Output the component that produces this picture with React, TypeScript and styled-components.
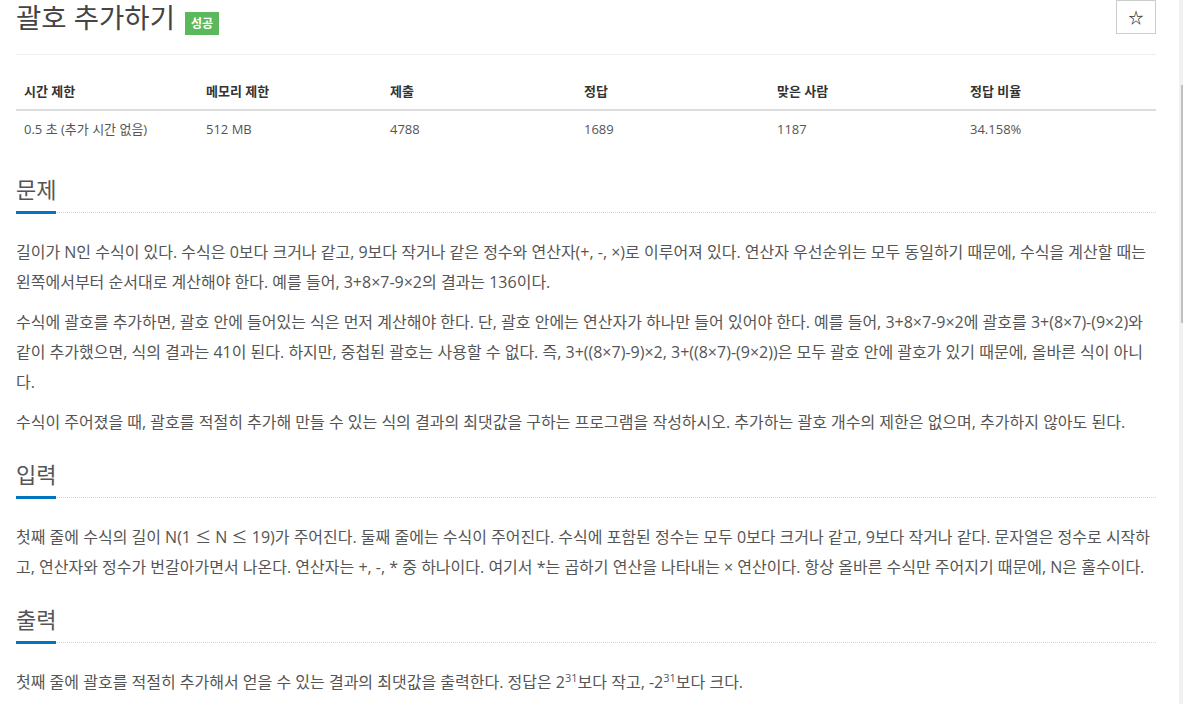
import { FunctionComponent } from 'react'
import styled, { createGlobalStyle } from 'styled-components'

const GlobalStyle = createGlobalStyle`
  html, body {
    margin: 0;
    padding: 0;
    background: #fff;
    overflow: hidden;
  }
  body {
    font-family: "Open Sans", "Noto Sans CJK KR", sans-serif;
    color: #555;
  }
`

const columns = [
  { key: 'time', label: '시간 제한', width: 182 },
  { key: 'memory', label: '메모리 제한', width: 184 },
  { key: 'submit', label: '제출', width: 194 },
  { key: 'accepted', label: '정답', width: 193 },
  { key: 'solved', label: '맞은 사람', width: 193 },
  { key: 'ratio', label: '정답 비율', width: 194 },
]

const stats: Record<string, string> = {
  time: '0.5 초 (추가 시간 없음)',
  memory: '512 MB',
  submit: '4788',
  accepted: '1689',
  solved: '1187',
  ratio: '34.158%',
}

interface SectionProps {
  title: string
}

const Section: FunctionComponent<React.PropsWithChildren<SectionProps>> = ({ title, children }) => (
  <SectionWrap>
    <Headline>
      <HeadlineTitle>{title}</HeadlineTitle>
    </Headline>
    <ProblemText>{children}</ProblemText>
  </SectionWrap>
)

export default function App() {
  return (
    <Page>
      <GlobalStyle />
      <Main>
        <Header>
          <TitleRow>
            <Title>괄호 추가하기</Title>
            <Badge>성공</Badge>
          </TitleRow>
          <StarButton aria-label="즐겨찾기">☆</StarButton>
        </Header>

        <InfoTable>
          <colgroup>
            {columns.map((c) => (
              <Col key={c.key} $w={c.width} />
            ))}
          </colgroup>
          <thead>
            <tr>
              {columns.map((c) => (
                <Th key={c.key}>{c.label}</Th>
              ))}
            </tr>
          </thead>
          <tbody>
            <tr>
              {columns.map((c) => (
                <Td key={c.key}>{stats[c.key]}</Td>
              ))}
            </tr>
          </tbody>
        </InfoTable>

        <Section title="문제">
          <p>
            길이가 N인 수식이 있다. 수식은 0보다 크거나 같고, 9보다 작거나 같은 정수와 연산자(+, -, ×)로 이루어져 있다. 연산자 우선순위는 모두 동일하기 때문에, 수식을 계산할 때는 왼쪽에서부터 순서대로 계산해야 한다. 예를 들어, 3+8×7-9×2의 결과는 136이다.
          </p>
          <p>
            수식에 괄호를 추가하면, 괄호 안에 들어있는 식은 먼저 계산해야 한다. 단, 괄호 안에는 연산자가 하나만 들어 있어야 한다. 예를 들어, 3+8×7-9×2에 괄호를 3+(8×7)-(9×2)와 같이 추가했으면, 식의 결과는 41이 된다. 하지만, 중첩된 괄호는 사용할 수 없다. 즉, 3+((8×7)-9)×2, 3+((8×7)-(9×2))은 모두 괄호 안에 괄호가 있기 때문에, 올바른 식이 아니다.
          </p>
          <p>
            수식이 주어졌을 때, 괄호를 적절히 추가해 만들 수 있는 식의 결과의 최댓값을 구하는 프로그램을 작성하시오. 추가하는 괄호 개수의 제한은 없으며, 추가하지 않아도 된다.
          </p>
        </Section>

        <Section title="입력">
          <p>
            첫째 줄에 수식의 길이 N(1 <MathOp>≤</MathOp> N <MathOp>≤</MathOp> 19)가 주어진다. 둘째 줄에는 수식이 주어진다. 수식에 포함된 정수는 모두 0보다 크거나 같고, 9보다 작거나 같다. 문자열은 정수로 시작하고, 연산자와 정수가 번갈아가면서 나온다. 연산자는 +, -, * 중 하나이다. 여기서 *는 곱하기 연산을 나타내는 × 연산이다. 항상 올바른 수식만 주어지기 때문에, N은 홀수이다.
          </p>
        </Section>

        <Section title="출력">
          <p>
            첫째 줄에 괄호를 적절히 추가해서 얻을 수 있는 결과의 최댓값을 출력한다. 정답은 2<sup>31</sup>보다 작고, -2<sup>31</sup>보다 크다.
          </p>
        </Section>
      </Main>
      <ScrollTrack>
        <ScrollThumb />
      </ScrollTrack>
    </Page>
  )
}

const Page = styled.div`
  display: flex;
  height: 704px;
  overflow: hidden;
`

const Main = styled.div`
  flex: 1;
  min-width: 0;
  padding: 0 23px 0 16px;
  overflow: hidden;
`

const ScrollTrack = styled.div`
  width: 4px;
  background: #f1f1f1;
  padding-top: 85px;
`

const ScrollThumb = styled.div`
  width: 2px;
  height: 238px;
  margin-left: 2px;
  background: #c1c1c1;
`

const Header = styled.div`
  display: flex;
  justify-content: space-between;
  align-items: flex-start;
  height: 54px;
  border-bottom: 1px solid #eee;
`

const TitleRow = styled.div`
  display: flex;
  align-items: flex-start;
  gap: 10px;
`

const Title = styled.h1`
  margin: 0;
  font-size: 27.5px;
  font-weight: 400;
  line-height: 36px;
  color: #444;
`

const Badge = styled.span`
  margin-top: 12px;
  height: 23px;
  padding: 0 6px;
  background: #5cb85c;
  color: #fff;
  font-size: 12px;
  font-weight: 700;
  line-height: 23px;
`

const StarButton = styled.button`
  width: 40px;
  height: 34px;
  padding: 0 0 2px;
  border: 1px solid #ccc;
  background: #fff;
  color: #333;
  font-family: "Noto Sans CJK KR", sans-serif;
  font-size: 15px;
  font-weight: 700;
  line-height: 1;
  cursor: pointer;
`

const InfoTable = styled.table`
  width: 100%;
  margin-top: 18px;
  border-collapse: collapse;
  table-layout: fixed;
  font-size: 13px;
`

const Col = styled.col<{ $w: number }>`
  width: ${(p) => p.$w}px;
`

const Th = styled.th`
  padding: 8px;
  text-align: left;
  line-height: 20px;
  font-weight: 700;
  color: #333;
  border-bottom: 2px solid #ddd;
`

const Td = styled.td`
  padding: 8px;
  line-height: 20px;
  color: #555;
`

const SectionWrap = styled.section`
  margin-top: 31px;

  & + & {
    margin-top: 26px;
  }
`

const Headline = styled.div`
  border-bottom: 1px dotted #d5d5d5;
  margin-bottom: 24px;
`

const HeadlineTitle = styled.h2`
  display: inline-block;
  margin: 0 0 -2px;
  padding-bottom: 11px;
  font-size: 22px;
  font-weight: 400;
  line-height: 22px;
  color: #555;
  border-bottom: 3px solid #0076c0;
`

const ProblemText = styled.div`
  font-size: 16px;
  line-height: 30px;
  color: #555;

  p {
    margin: 0 0 10px;
  }

  sup {
    font-size: 11px;
    line-height: 0;
  }
`

const MathOp = styled.span`
  font-family: "Noto Sans CJK KR", sans-serif;
  line-height: 1;
`
